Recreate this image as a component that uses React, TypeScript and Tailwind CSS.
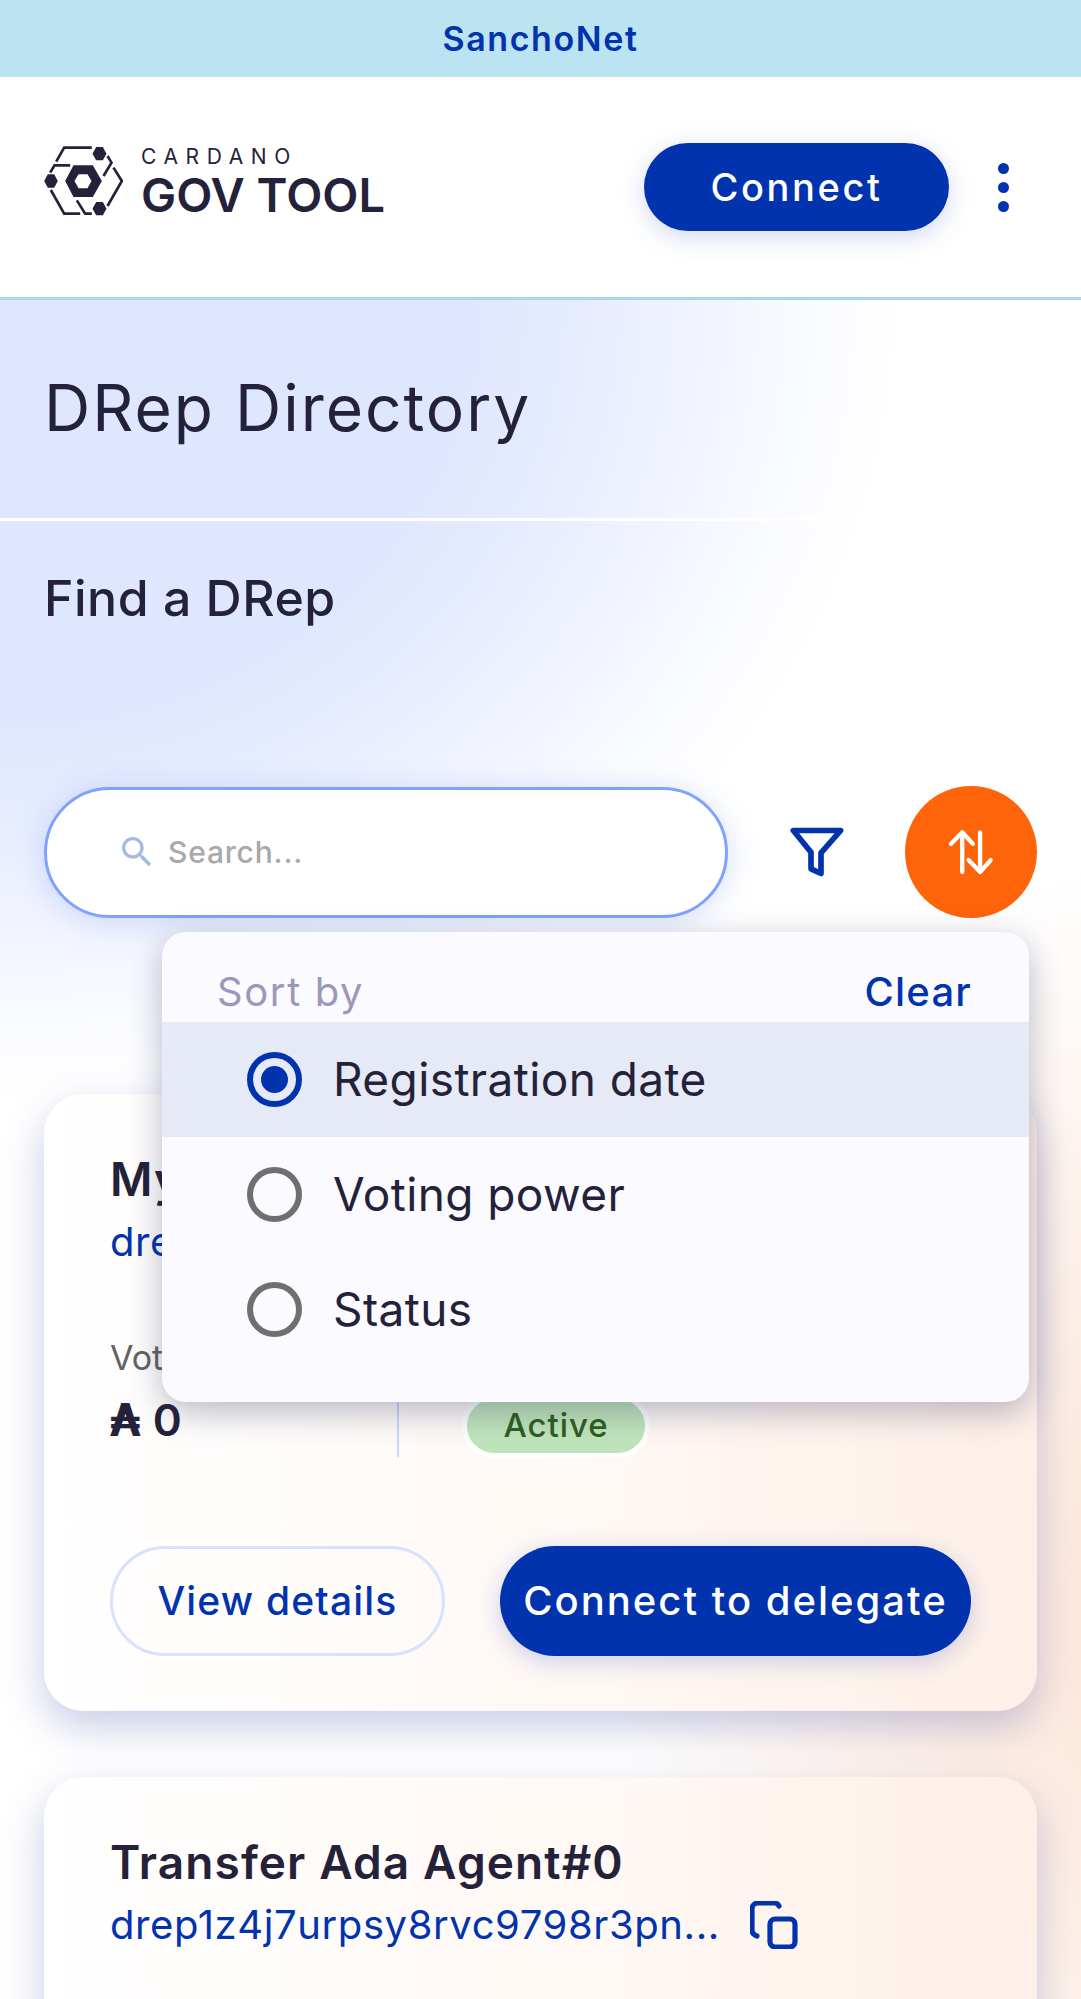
export default function App() {
  return (
    <div className="relative h-[1999px] w-full overflow-hidden bg-white text-[#24223a] font-['Inter','Liberation_Sans',sans-serif]">
      <div className="flex h-[77px] items-center justify-center bg-[#bbe3f2] text-[34px] font-semibold tracking-[1.6px] text-[#0033ad]">
        SanchoNet
      </div>
      <header className="flex h-[223px] items-center border-b-[3px] border-[#a9d9e8] bg-white pl-[44px] pr-[72px]">
        <Logo />
        <button className="ml-auto flex h-[88px] w-[305px] items-center justify-center rounded-full bg-[#0033ad] text-[38px] font-medium tracking-[2.6px] text-white shadow-[0_6px_24px_rgba(51,85,190,0.22)]">
          Connect
        </button>
        <div className="ml-[49px] flex flex-col gap-[8px]">
          <span className="h-[11px] w-[11px] rounded-full bg-[#0033ad]" />
          <span className="h-[11px] w-[11px] rounded-full bg-[#0033ad]" />
          <span className="h-[11px] w-[11px] rounded-full bg-[#0033ad]" />
        </div>
      </header>

      <main className="h-[1699px] bg-[radial-gradient(ellipse_900px_800px_at_0px_0px,#dfe7ff_0%,#dfe7ff_52%,#e6ecff_64%,#f1f4ff_78%,#fafbff_90%,rgba(255,255,255,0)_100%),radial-gradient(ellipse_560px_760px_at_1170px_1320px,#fde4d6_0%,rgba(253,236,226,0.75)_50%,rgba(255,255,255,0)_100%)]">
        <div className="flex h-[221px] items-center border-b-[3px] border-white pl-[44px] pb-[3px]">
          <h1 className="text-[64px] font-normal tracking-[2px]">DRep Directory</h1>
        </div>
        <section className="px-[44px]">
          <h2 className="mt-[47px] h-[60px] text-[50px] leading-[60px] font-medium tracking-[0.5px]">Find a DRep</h2>
          <div className="relative mt-[158px] flex items-center">
            <div className="flex h-[131px] w-[684px] items-center rounded-full border-[3px] border-[#7da2ff] bg-white pl-[70px] shadow-[0_4px_30px_rgba(110,145,235,0.3)]">
              <svg width="40" height="40" viewBox="0 0 24 24" fill="#a6b8e4">
                <path d="M15.5 14h-.79l-.28-.27C15.41 12.59 16 11.11 16 9.5 16 5.91 13.09 3 9.5 3S3 5.91 3 9.5 5.91 16 9.5 16c1.61 0 3.09-.59 4.23-1.57l.27.28v.79l5 4.99L20.49 19l-4.99-5zm-6 0C7.01 14 5 11.99 5 9.5S7.01 5 9.5 5 14 7.01 14 9.5 11.99 14 9.5 14z" />
              </svg>
              <span className="ml-[11px] text-[30px] font-medium tracking-[0.8px] text-[#a9a9a9]">Search...</span>
            </div>
            <svg className="ml-[62px]" width="55" height="52" viewBox="90 170 165 155" fill="none" stroke="#0033ad" strokeWidth="17" strokeLinejoin="round">
              <path d="M100 183H242L183 250V312L153 298V248Z" />
            </svg>
            <button className="ml-auto flex h-[132px] w-[132px] items-center justify-center rounded-full bg-[#ff640a]">
              <svg width="48" height="48" viewBox="560 175 145 145" fill="none" stroke="#fff" strokeWidth="13" strokeLinecap="round" strokeLinejoin="round">
                <path d="M606 308V190M572 223L606 188L638 223M660 188V308M625 272L660 308L692 272" />
              </svg>
            </button>
            <div className="absolute left-[118px] top-[146px] z-10 h-[470px] w-[867px] rounded-[24px] bg-[#fbfbff] shadow-[0_10px_34px_rgba(40,50,90,0.33)]">
              <div className="flex h-[90px] items-end justify-between pl-[55px] pr-[57px] text-[40px]">
                <span className="tracking-[1.6px] text-[#9c97bb]">Sort by</span>
                <span className="font-medium tracking-[1.2px] text-[#0033ad]">Clear</span>
              </div>
              <SortRow label="Registration date" selected />
              <SortRow label="Voting power" />
              <SortRow label="Status" />
            </div>
          </div>

          <Card top="mt-[176px]" title="My DRep" id="drep1ytvlwvyjmzfyn56n3dj">
            <div className="mt-[60px] flex h-[127px]">
              <div className="w-[289px] border-r-2 border-[#c9d7fb]">
                <p className="h-[56px] text-[34px] leading-[56px] text-[#636363]">Voting power</p>
                <p className="mt-[6px] flex items-baseline gap-[12px] text-[44px] leading-[56px] font-semibold">
                  <span className="font-['DejaVu_Sans',sans-serif] text-[44px] font-bold">₳</span>
                  <span>0</span>
                </p>
              </div>
              <div className="pl-[63px]">
                <p className="h-[56px] text-[34px] leading-[56px] text-[#636363]">Status</p>
                <span className="mt-[8px] flex h-[64px] w-[188px] items-center justify-center rounded-full border-[5px] border-white bg-[#c0e4ba] text-[33px] font-medium tracking-[0.9px] text-[#2f5e22]">
                  Active
                </span>
              </div>
            </div>
            <div className="mt-[89px] flex gap-[55px]">
              <button className="h-[110px] w-[335px] rounded-full border-[3px] border-[#d6e2ff] text-[39px] font-medium tracking-[1.2px] text-[#0033ad]">
                View details
              </button>
              <button className="h-[110px] w-[471px] rounded-full bg-[#0033ad] text-[40px] font-medium tracking-[2px] text-white shadow-[0_6px_24px_rgba(51,85,190,0.25)]">
                Connect to delegate
              </button>
            </div>
          </Card>
          <Card top="mt-[66px]" title="Transfer Ada Agent#0" id="drep1z4j7urpsy8rvc9798r3pn...">
            <div className="h-[300px]" />
          </Card>
        </section>
      </main>
    </div>
  );
}

function Card({ top, title, id, children }: { top: string; title: string; id: string; children: React.ReactNode }) {
  return (
    <article className={`${top} rounded-[40px] bg-[linear-gradient(90deg,#ffffff_0%,#fff8f4_55%,#fef0e8_100%)] px-[66px] pt-[52px] pb-[55px] shadow-[0_16px_40px_rgba(70,85,170,0.3)]`}>
      <h3 className="h-[66px] text-[46px] leading-[66px] font-semibold tracking-[1.1px]">{title}</h3>
      <div className="mt-[2px] flex h-[56px] items-center">
        <span className="text-[40px] tracking-[0.6px] text-[#0033ad]">{id}</span>
        <svg className="ml-[30px] shrink-0" width="48" height="48" viewBox="0 0 24 24" fill="none" stroke="#0033ad" strokeWidth="2.6" strokeLinecap="round" strokeLinejoin="round">
          <rect x="10" y="9" width="12.5" height="14" rx="2.5" />
          <path d="M3.5 17.5C2 17 1 16 1 14.5V4a3 3 0 0 1 3-3h8.5a2.5 2.5 0 0 1 2 1.5" />
        </svg>
      </div>
      {children}
    </article>
  );
}

function SortRow({ label, selected }: { label: string; selected?: boolean }) {
  return (
    <div className={`flex h-[115px] items-center pl-[85px] ${selected ? "bg-[#e6eaf6]" : ""}`}>
      <span className={`flex h-[55px] w-[55px] items-center justify-center rounded-full border-[6px] ${selected ? "border-[#0033ad]" : "border-[#6f6f6f]"}`}>
        {selected && <span className="h-[27px] w-[27px] rounded-full bg-[#0033ad]" />}
      </span>
      <span className="ml-[31px] text-[46px] tracking-[0.4px]">{label}</span>
    </div>
  );
}

function Logo() {
  return (
    <div className="mb-[12px] flex items-center">
      <svg width="79" height="70" viewBox="72 75 236 210" fill="none" stroke="#24223a" strokeWidth="8">
        <path d="M108 122L132 80H215M90 155L103 133H150M262 105L274 125L250 165M280 140L305 180L262 255M92 207L132 278H180M170 238L195 278H215" />
        <path fillRule="evenodd" stroke="none" fill="#24223a" d="M135 180L160 133H218L245 180L218 228H160ZM163 180L175 202H202L214 180L202 160H175Z" />
        <path stroke="none" fill="#24223a" d="M217 98L228 78H248L259 98L248 118H228ZM72 180L83 160H102L113 180L102 200H83ZM217 263L228 243H248L259 263L248 283H228Z" />
      </svg>
      <div className="ml-[18px] flex flex-col">
        <span className="text-[21px] leading-[22px] font-normal tracking-[7.6px]">CARDANO</span>
        <span className="mt-[6px] text-[47px] leading-[42px] font-semibold tracking-[0px]">GOV TOOL</span>
      </div>
    </div>
  );
}
